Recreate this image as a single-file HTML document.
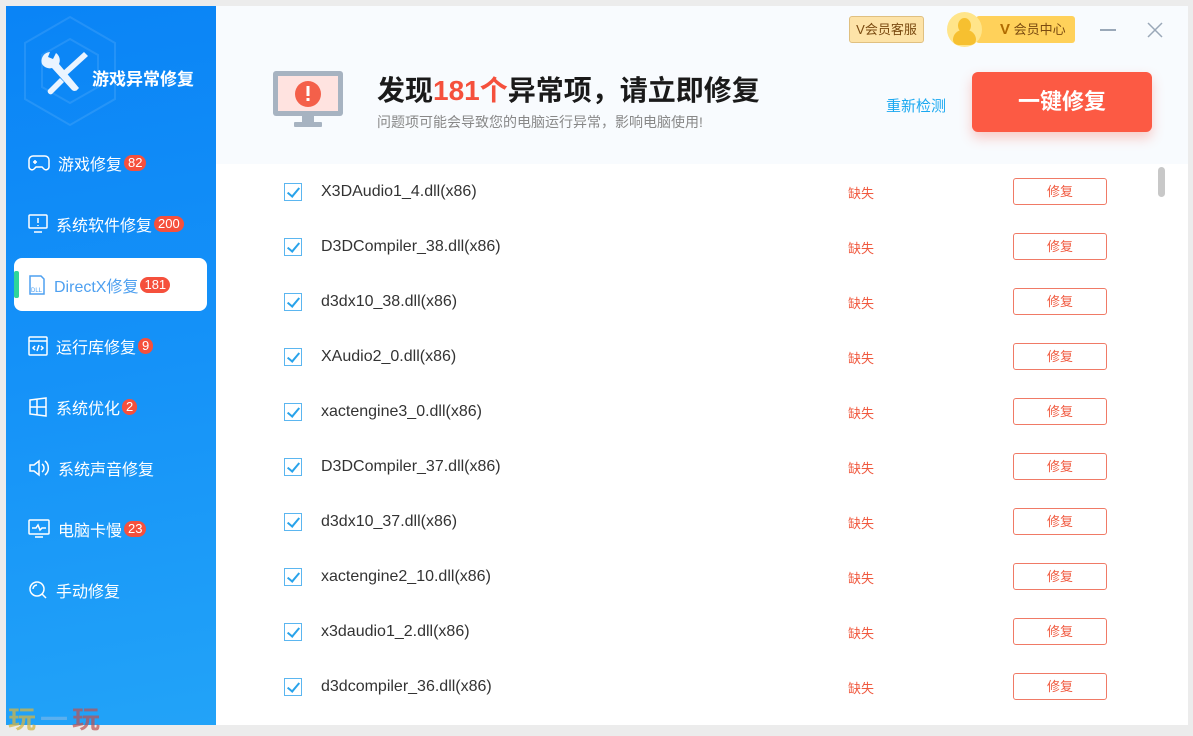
<!DOCTYPE html>
<html><head><meta charset="utf-8"><style>
*{margin:0;padding:0;box-sizing:border-box}
body{width:1193px;height:734px;background:#ececec;position:relative;overflow:hidden;font-family:"Liberation Sans","Noto Sans CJK SC",sans-serif}
#side{position:absolute;left:6px;top:6px;width:210px;height:719px;background:linear-gradient(170deg,#0a84f6 0%,#1592f8 50%,#22a3f8 100%)}
#main{position:absolute;left:216px;top:6px;width:972px;height:719px;background:#fff}
#head{position:absolute;left:0;top:0;width:972px;height:158px;background:#f8fbfe}
.nav{position:absolute;left:22px;height:24px;color:#fff;font-size:16px;display:flex;align-items:center}
.nav svg{margin-right:8px}
.badge{background:#f5503c;color:#fff;font-size:13px;border-radius:9px;padding:0 4px;height:16px;line-height:16px;margin-left:2px}
.row{position:absolute;left:0;width:972px;height:55px}
.cb{position:absolute;left:68px;top:17px;width:18px;height:18px;border:1px solid #5bb6f0;background:#fff}
.cb::after{content:"";position:absolute;left:5px;top:1px;width:5px;height:10px;border-right:2px solid #29a3ea;border-bottom:2px solid #29a3ea;transform:rotate(40deg)}
.nm{position:absolute;left:105px;top:17px;font-size:16px;color:#333}
.ms{position:absolute;left:632px;top:17px;font-size:13px;color:#f05a40}
.bt{position:absolute;left:797px;top:12px;width:94px;height:27px;border:1px solid #f07a66;border-radius:3px;color:#f05a40;font-size:13px;text-align:center;line-height:25px}
</style></head><body>
<div id="side">
 <svg style="position:absolute;left:14px;top:8px" width="100" height="115" viewBox="0 0 100 115"><polygon points="50,3 95,29 95,85 50,111 5,85 5,29" fill="none" stroke="rgba(255,255,255,.1)" stroke-width="2"/><polygon points="50,25 78,41 78,73 50,89 22,73 22,41" fill="none" stroke="rgba(255,255,255,.1)" stroke-width="2"/></svg>
 <svg style="position:absolute;left:34px;top:44px" width="50" height="48" viewBox="0 0 50 48"><path d="M10 2a9 9 0 0 0-8 12 9 9 0 0 0 10 4l20 22a4 4 0 0 0 6-1l1-1-20-24a9 9 0 0 0-3-11l-3 6-5-2z" fill="#eaf4ff"/><path d="M44 2l4 4-22 20-4-4z" fill="#eaf4ff"/><path d="M20 28l4 4-12 12a3 3 0 0 1-4-4z" fill="#eaf4ff"/></svg>
 <div style="position:absolute;left:86px;top:59px;color:#fff;font-size:17px;font-weight:bold">游戏异常修复</div>
 <div class="nav" style="top:145px"><svg width="22" height="18" viewBox="0 0 22 18" fill="none" stroke="#fff" stroke-width="1.5"><path d="M5 2h12a4 4 0 0 1 4 4l0 7a3 3 0 0 1-5 2l-2-2H8l-2 2a3 3 0 0 1-5-2V6a4 4 0 0 1 4-4z"/><path d="M5 8h4M7 6v4"/></svg>游戏修复<span class="badge">82</span></div>
 <div class="nav" style="top:206px"><svg width="20" height="20" viewBox="0 0 20 20" fill="none" stroke="#fff" stroke-width="1.5"><rect x="1" y="1" width="18" height="13" rx="1"/><path d="M10 4v5M10 11v1M6 18h8"/></svg>系统软件修复<span class="badge">200</span></div>
 <div style="position:absolute;left:8px;top:252px;width:193px;height:53px;background:#fff;border-radius:8px"></div>
 <div style="position:absolute;left:8px;top:265px;width:5px;height:27px;background:#2fd59a;border-radius:2px"></div>
 <div class="nav" style="top:267px;color:#4ea0f0"><svg width="18" height="20" viewBox="0 0 18 20" fill="none" stroke="#4ea0f0" stroke-width="1.5"><path d="M2 1h11l3 3v15H2z"/><text x="3" y="17" font-size="6" fill="#4ea0f0" stroke="none">DLL</text></svg>DirectX修复<span class="badge">181</span></div>
 <div class="nav" style="top:328px"><svg width="20" height="20" viewBox="0 0 20 20" fill="none" stroke="#fff" stroke-width="1.5"><rect x="1" y="1" width="18" height="18" rx="1"/><path d="M1 5h18M7 10l-2 2 2 2M13 10l2 2-2 2M11 9l-2 6"/></svg>运行库修复<span class="badge">9</span></div>
 <div class="nav" style="top:389px"><svg width="20" height="20" viewBox="0 0 20 20" fill="none" stroke="#fff" stroke-width="1.5"><path d="M2 3l16-2v18l-16-2zM2 10h16M9 2v16"/></svg>系统优化<span class="badge">2</span></div>
 <div class="nav" style="top:450px"><svg width="22" height="20" viewBox="0 0 22 20" fill="none" stroke="#fff" stroke-width="1.5"><path d="M2 7h4l5-4v14l-5-4H2z"/><path d="M14 6a5 5 0 0 1 0 8M17 3a9 9 0 0 1 0 14"/></svg>系统声音修复</div>
 <div class="nav" style="top:511px"><svg width="22" height="20" viewBox="0 0 22 20" fill="none" stroke="#fff" stroke-width="1.5"><rect x="1" y="1" width="20" height="14" rx="1"/><path d="M4 9h4l2-3 2 5 2-2h4M7 18h8"/></svg>电脑卡慢<span class="badge">23</span></div>
 <div class="nav" style="top:572px"><svg width="20" height="20" viewBox="0 0 20 20" fill="none" stroke="#fff" stroke-width="1.5"><circle cx="9" cy="9" r="7"/><path d="M14 14l4 4M5 9a4 4 0 0 1 4-4"/></svg>手动修复</div>
 <div style="position:absolute;left:2px;top:692px;font-size:28px;font-weight:bold;color:rgba(210,180,70,.75);letter-spacing:4px;transform:scaleY(.9)">玩<span style="color:rgba(150,190,230,.5)">一</span><span style="color:rgba(190,80,80,.7)">玩</span></div>
</div>
<div id="main">
 <div id="head">
  <div style="position:absolute;left:633px;top:10px;width:75px;height:27px;background:#fde3a8;border:1px solid #e0c080;border-radius:3px;font-size:13px;color:#7a4a10;text-align:center;line-height:25px">V会员客服</div>
  <div style="position:absolute;left:760px;top:10px;width:99px;height:27px;background:#ffd15a;border-radius:3px;font-size:13px;color:#7a4a10;line-height:27px;padding-left:24px;white-space:nowrap"><b style="color:#b06a00;font-size:15px">V</b> 会员中心</div>
  <div style="position:absolute;left:731px;top:6px;width:35px;height:35px;border-radius:50%;background:#ffe58a"><div style="position:absolute;left:11px;top:6px;width:13px;height:15px;border-radius:50%;background:#f6c030"></div><div style="position:absolute;left:6px;top:18px;width:23px;height:15px;border-radius:11px 11px 6px 6px;background:#f6c030"></div></div>
  <div style="position:absolute;left:884px;top:23px;width:16px;height:1.5px;background:#9aa8b8"></div>
  <svg style="position:absolute;left:931px;top:16px" width="16" height="16" viewBox="0 0 16 16" stroke="#9aa8b8" stroke-width="1.5"><path d="M1 1l14 14M15 1L1 15"/></svg>
  <svg style="position:absolute;left:56px;top:64px" width="72" height="60" viewBox="0 0 72 60"><rect x="1" y="1" width="70" height="45" rx="3" fill="#a7b3c1"/><rect x="6" y="6" width="60" height="35" fill="#ffe3e0"/><circle cx="36" cy="24" r="13" fill="#f4604a"/><rect x="34.5" y="16" width="3" height="10" fill="#fff"/><rect x="34.5" y="28" width="3" height="3" fill="#fff"/><rect x="30" y="46" width="12" height="6" fill="#a7b3c1"/><rect x="22" y="52" width="28" height="5" rx="1" fill="#a7b3c1"/></svg>
  <div style="position:absolute;left:161px;top:63px;font-size:28px;font-weight:bold;color:#1a1a1a">发现<span style="color:#f5503c">181个</span>异常项，请立即修复</div>
  <div style="position:absolute;left:161px;top:106px;font-size:14px;color:#888">问题项可能会导致您的电脑运行异常，影响电脑使用!</div>
  <div style="position:absolute;left:670px;top:89px;font-size:15px;color:#1aa8f0">重新检测</div>
  <div style="position:absolute;left:756px;top:66px;width:180px;height:60px;background:#fc5a44;border-radius:6px;box-shadow:0 6px 12px rgba(250,90,70,.3);color:#fff;font-size:22px;font-weight:bold;text-align:center;line-height:60px">一键修复</div>
 </div>
 <div style="position:absolute;left:942px;top:161px;width:7px;height:30px;background:#c8c8c8;border-radius:4px"></div>
 <div class="row" style="top:160px"><div class="cb"></div><div class="nm">X3DAudio1_4.dll(x86)</div><div class="ms">缺失</div><div class="bt">修复</div></div>
 <div class="row" style="top:215px"><div class="cb"></div><div class="nm">D3DCompiler_38.dll(x86)</div><div class="ms">缺失</div><div class="bt">修复</div></div>
 <div class="row" style="top:270px"><div class="cb"></div><div class="nm">d3dx10_38.dll(x86)</div><div class="ms">缺失</div><div class="bt">修复</div></div>
 <div class="row" style="top:325px"><div class="cb"></div><div class="nm">XAudio2_0.dll(x86)</div><div class="ms">缺失</div><div class="bt">修复</div></div>
 <div class="row" style="top:380px"><div class="cb"></div><div class="nm">xactengine3_0.dll(x86)</div><div class="ms">缺失</div><div class="bt">修复</div></div>
 <div class="row" style="top:435px"><div class="cb"></div><div class="nm">D3DCompiler_37.dll(x86)</div><div class="ms">缺失</div><div class="bt">修复</div></div>
 <div class="row" style="top:490px"><div class="cb"></div><div class="nm">d3dx10_37.dll(x86)</div><div class="ms">缺失</div><div class="bt">修复</div></div>
 <div class="row" style="top:545px"><div class="cb"></div><div class="nm">xactengine2_10.dll(x86)</div><div class="ms">缺失</div><div class="bt">修复</div></div>
 <div class="row" style="top:600px"><div class="cb"></div><div class="nm">x3daudio1_2.dll(x86)</div><div class="ms">缺失</div><div class="bt">修复</div></div>
 <div class="row" style="top:655px"><div class="cb"></div><div class="nm">d3dcompiler_36.dll(x86)</div><div class="ms">缺失</div><div class="bt">修复</div></div>
</div>
</body></html>
